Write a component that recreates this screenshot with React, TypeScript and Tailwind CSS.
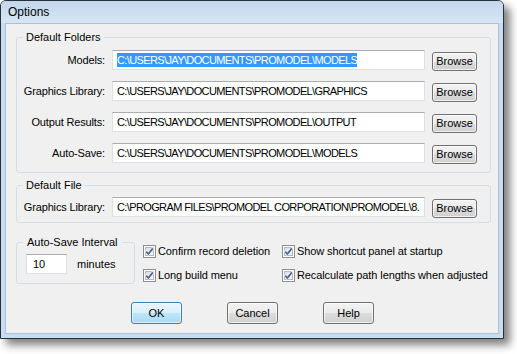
import React from 'react'

const ui = { fontFamily: '"Liberation Sans", Arial, sans-serif' }

function Check() {
    return (
        <span className="relative inline-block w-[13px] h-[13px] shrink-0 border border-[#8e8f8f] bg-white">
            <span className="absolute inset-[1px] border border-[#b5b8c0] bg-gradient-to-br from-[#dcdfe4] to-[#f7f7f7]" />
            <svg className="absolute inset-0" width="11" height="11" viewBox="0 0 11 11">
                <path d="M2.2 5.6 L4.4 8 L8.8 2.4" fill="none" stroke="#ffffff" strokeWidth="3" strokeLinecap="round" strokeLinejoin="round" opacity="0.7" />
                <path d="M2.2 5.6 L4.4 8 L8.8 2.4" fill="none" stroke="#4a5f97" strokeWidth="1.7" strokeLinejoin="round" />
            </svg>
        </span>
    )
}

function BrowseButton() {
    return (
        <button className="w-[45px] h-[19px] rounded-[3px] border border-[#707070] bg-[linear-gradient(#f2f2f2_0%,#ebebeb_50%,#dddddd_50%,#cfcfcf_100%)] text-[11px] leading-none text-black shadow-[inset_0_0_0_1px_rgba(255,255,255,0.7)]">
            Browse
        </button>
    )
}

function PathRow({ label, path, selected }: { label: string; path: string; selected?: boolean }) {
    return (
        <div className="flex items-center h-[20px]">
            <span className="w-[88px] text-right text-[11px] tracking-[-0.15px] text-black">{label}</span>
            <div className="ml-[7px] w-[313px] h-[20px] flex items-center border border-[#dde1e7] border-t-[#abadb3] bg-white pl-[4px] overflow-hidden whitespace-nowrap">
                <span className={`text-[11px] leading-[14px] tracking-[-0.62px] ${selected ? 'bg-[#3399ff] text-white' : 'text-black'}`}>
                    {path}
                </span>
            </div>
            <div className="ml-[7px]">
                <BrowseButton />
            </div>
        </div>
    )
}

function DlgButton({ label, focused }: { label: string; focused?: boolean }) {
    return (
        <button
            className={`w-[51px] h-[22px] rounded-[3px] border text-[11px] text-black leading-none ${
                focused
                    ? 'border-[#3c7fb1] bg-[linear-gradient(#eaf6fd_0%,#d9f0fc_50%,#bee6fd_50%,#a7d9f5_100%)] shadow-[inset_0_0_0_1px_rgba(255,255,255,0.6)]'
                    : 'border-[#707070] bg-[linear-gradient(#f2f2f2_0%,#ebebeb_50%,#dddddd_50%,#cfcfcf_100%)] shadow-[inset_0_0_0_1px_rgba(255,255,255,0.7)]'
            }`}
        >
            {label}
        </button>
    )
}

export default function App() {
    return (
        <div className="w-[517px] h-[354px] bg-white" style={ui}>
            <div className="w-[504px] h-[339px] flex flex-col border border-[#26313c] rounded-t-[6px] bg-[#c9dcf0] shadow-[6px_6px_9px_rgba(0,0,0,0.5)]">
                {/* title bar */}
                <div className="h-[22px] px-[7px] flex items-center rounded-t-[5px] bg-gradient-to-b from-[#c3d7ec] to-[#d6e5f4]">
                    <span className="text-[12px] text-black">Options</span>
                </div>

                {/* client area */}
                <div className="flex-1 mx-[4px] mb-[4px] border border-[#a9c1da] bg-[#f0f0f0] pt-[6px] pl-[10px] pr-[7px]">
                    <fieldset className="border border-[#d5dfe5] rounded-[3px] pb-[9px]">
                        <legend className="ml-[6px] px-[3px] text-[11px] leading-[15px] text-black">Default Folders</legend>
                        <div className="flex flex-col gap-[11px] pt-[5px]">
                            <PathRow label="Models:" path="C:\USERS\JAY\DOCUMENTS\PROMODEL\MODELS" selected />
                            <PathRow label="Graphics Library:" path="C:\USERS\JAY\DOCUMENTS\PROMODEL\GRAPHICS" />
                            <PathRow label="Output Results:" path="C:\USERS\JAY\DOCUMENTS\PROMODEL\OUTPUT" />
                            <PathRow label="Auto-Save:" path="C:\USERS\JAY\DOCUMENTS\PROMODEL\MODELS" />
                        </div>
                    </fieldset>

                    <fieldset className="mt-[5px] border border-[#d5dfe5] rounded-[3px] pb-[5px]">
                        <legend className="ml-[6px] px-[3px] text-[11px] leading-[15px] text-black">Default File</legend>
                        <div className="pt-[4px]">
                            <PathRow label="Graphics Library:" path="C:\PROGRAM FILES\PROMODEL CORPORATION\PROMODEL\8." />
                        </div>
                    </fieldset>

                    <div className="mt-[12px] flex">
                        <fieldset className="w-[119px] border border-[#d5dfe5] rounded-[3px] pb-[9px]">
                            <legend className="ml-[6px] px-[4px] text-[11px] leading-[15px] text-black">Auto-Save Interval</legend>
                            <div className="pt-[4px] pl-[9px] flex items-center">
                                <div className="w-[41px] h-[20px] flex items-center border border-[#dde1e7] border-t-[#abadb3] bg-white pl-[6px] text-[11px] text-black">
                                    10
                                </div>
                                <span className="ml-[10px] text-[11px] text-black">minutes</span>
                            </div>
                        </fieldset>

                        <div className="ml-[8px] pt-[10px] grid grid-cols-[139px_auto] gap-y-[9px]">
                            <label className="h-[13px] flex items-center gap-[2px] text-[11px] tracking-[-0.1px] text-black whitespace-nowrap">
                                <Check /> Confirm record deletion
                            </label>
                            <label className="h-[13px] flex items-center gap-[2px] text-[11px] tracking-[-0.1px] text-black whitespace-nowrap">
                                <Check /> Show shortcut panel at startup
                            </label>
                            <label className="h-[13px] flex items-center gap-[2px] text-[11px] tracking-[-0.1px] text-black whitespace-nowrap">
                                <Check /> Long build menu
                            </label>
                            <label className="h-[13px] flex items-center gap-[2px] text-[11px] tracking-[-0.1px] text-black whitespace-nowrap">
                                <Check /> Recalculate path lengths when adjusted
                            </label>
                        </div>
                    </div>

                    <div className="mt-[18px] flex justify-center gap-[45px] pr-[2px]">
                        <DlgButton label="OK" focused />
                        <DlgButton label="Cancel" />
                        <DlgButton label="Help" />
                    </div>
                </div>
            </div>
        </div>
    )
}
